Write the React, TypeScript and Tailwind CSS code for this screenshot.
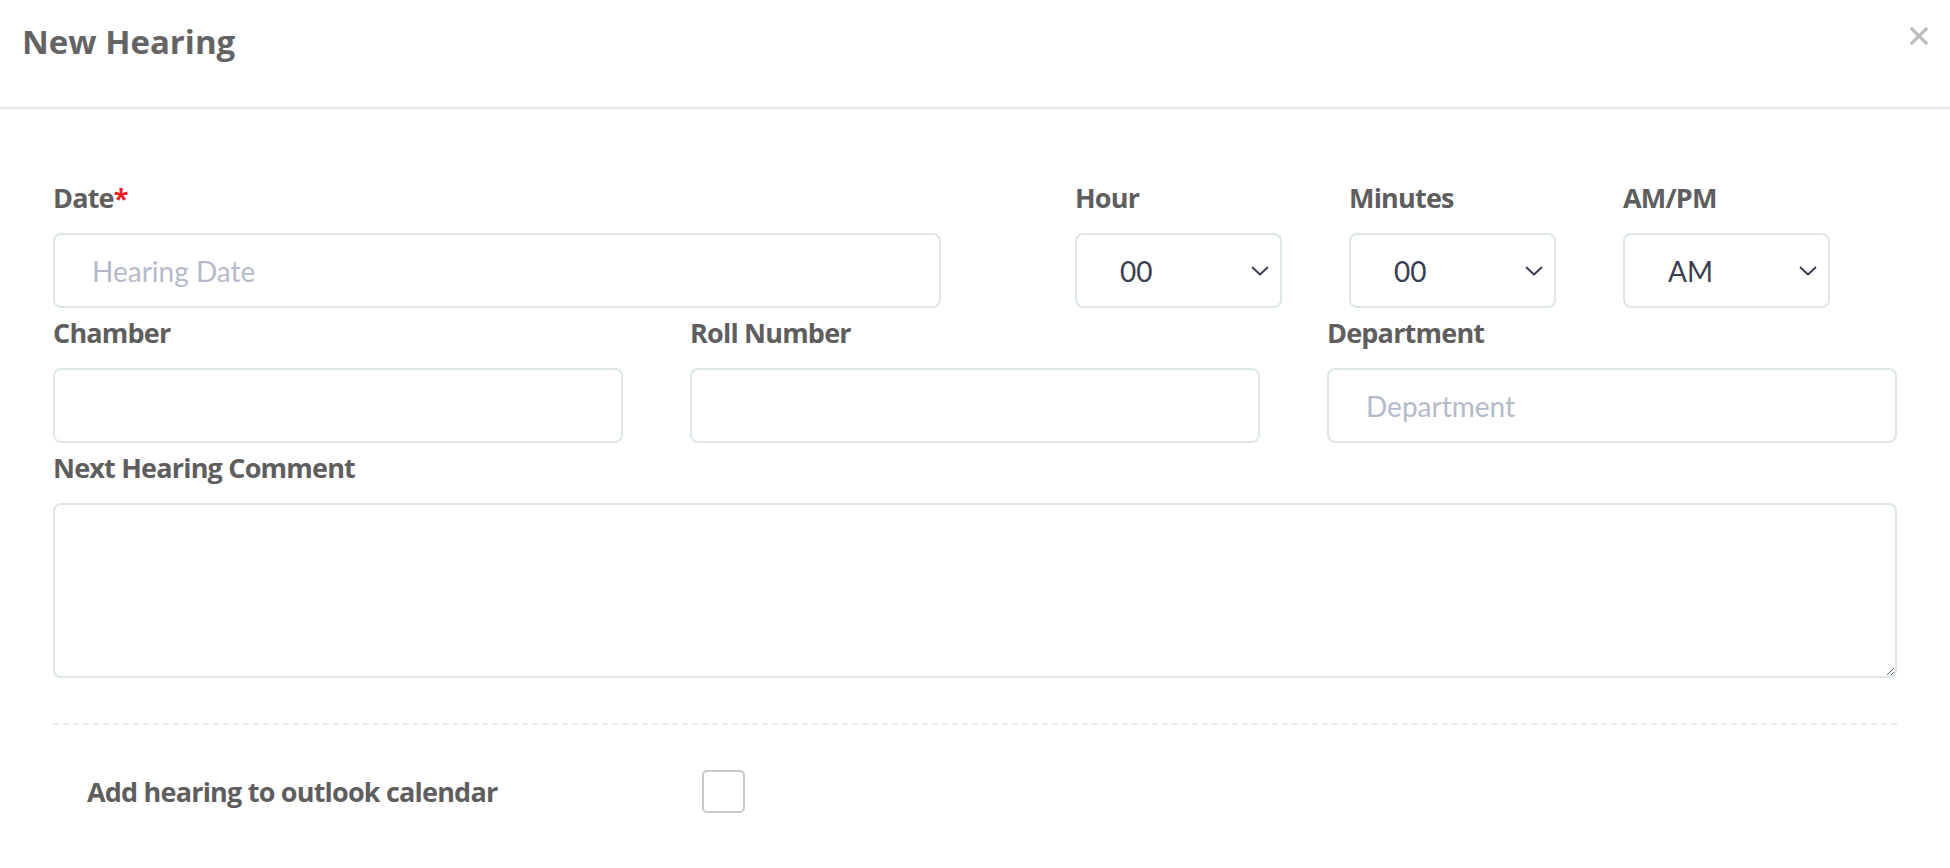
import React from 'react';

const labelCls =
  "block text-[27px] leading-[36px] font-bold tracking-[-0.8px] text-[#5e5e5e] mb-[17px] font-['Open_Sans',sans-serif]";
const boxCls =
  "w-full h-[75px] border-2 border-[#dde6e9] rounded-lg bg-white font-['Lato',sans-serif] text-[28px] text-[#3a3e52] outline-none";

const Chevron: React.FC = () => (
  <svg width="18" height="10" viewBox="0 0 18 10" fill="none">
    <path d="M1.5 1.5 L9 8.5 L16.5 1.5" stroke="#333a4d" strokeWidth="1.8" strokeLinecap="round" strokeLinejoin="round" />
  </svg>
);

const SelectBox: React.FC<{ label: string; value: string }> = ({ label, value }) => (
  <div className="w-[207px]">
    <label className={labelCls}>{label}</label>
    <div className={`${boxCls} flex items-center justify-between pl-[43px] pr-[11px]`}>
      <span>{value}</span>
      <Chevron />
    </div>
  </div>
);

const TextField: React.FC<{ label: React.ReactNode; placeholder?: string }> = ({ label, placeholder }) => (
  <div>
    <label className={labelCls}>{label}</label>
    <input
      type="text"
      placeholder={placeholder}
      className={`${boxCls} px-[37px] placeholder:text-[#b5bacb]`}
    />
  </div>
);

export default function App() {
  return (
    <div className="w-[1950px] h-[868px] bg-white overflow-hidden font-['Open_Sans',sans-serif]">
      {/* Header */}
      <div className="flex justify-between items-start h-[109px] px-[22px] border-b-2 border-[#e4e4e4]">
        <h1 className="pt-[22px] text-[33px] leading-[40px] font-bold text-[#646464]">New Hearing</h1>
        <button className="mt-[27px] w-[18px] h-[18px]">
          <svg width="18" height="18" viewBox="0 0 18 18">
            <path d="M2 2 L16 16 M16 2 L2 16" stroke="#bdbdbd" strokeWidth="3.2" strokeLinecap="square" />
          </svg>
        </button>
      </div>

      {/* Form */}
      <div className="px-[53px] pt-[71px]">
        <div className="flex">
          <div className="w-[888px]">
            <TextField
              label={
                <>
                  Date<span className="text-[#ee1c25]">*</span>
                </>
              }
              placeholder="Hearing Date"
            />
          </div>
          <div className="ml-[134px] flex gap-[67px]">
            <SelectBox label="Hour" value="00" />
            <SelectBox label="Minutes" value="00" />
            <SelectBox label="AM/PM" value="AM" />
          </div>
        </div>

        <div className="grid grid-cols-3 gap-x-[67px] mt-[7px]">
          <TextField label="Chamber" />
          <TextField label="Roll Number" />
          <TextField label="Department" placeholder="Department" />
        </div>

        <div className="mt-[7px]">
          <label className={labelCls}>Next Hearing Comment</label>
          <textarea className="block w-full h-[175px] border-2 border-[#dde6e9] rounded-lg bg-white outline-none resize-y" />
        </div>

        <div className="mt-[45px] border-t-2 border-dashed border-[#ebebeb]" />

        <div className="flex items-center mt-[45px]">
          <span className="w-[649px] pl-[34px] text-[27px] leading-[36px] font-bold tracking-[-0.8px] text-[#5e5e5e]">
            Add hearing to outlook calendar
          </span>
          <div className="w-[43px] h-[43px] border-2 border-[#c9c9c9] rounded-[5px] bg-white" />
        </div>
      </div>
    </div>
  );
}
